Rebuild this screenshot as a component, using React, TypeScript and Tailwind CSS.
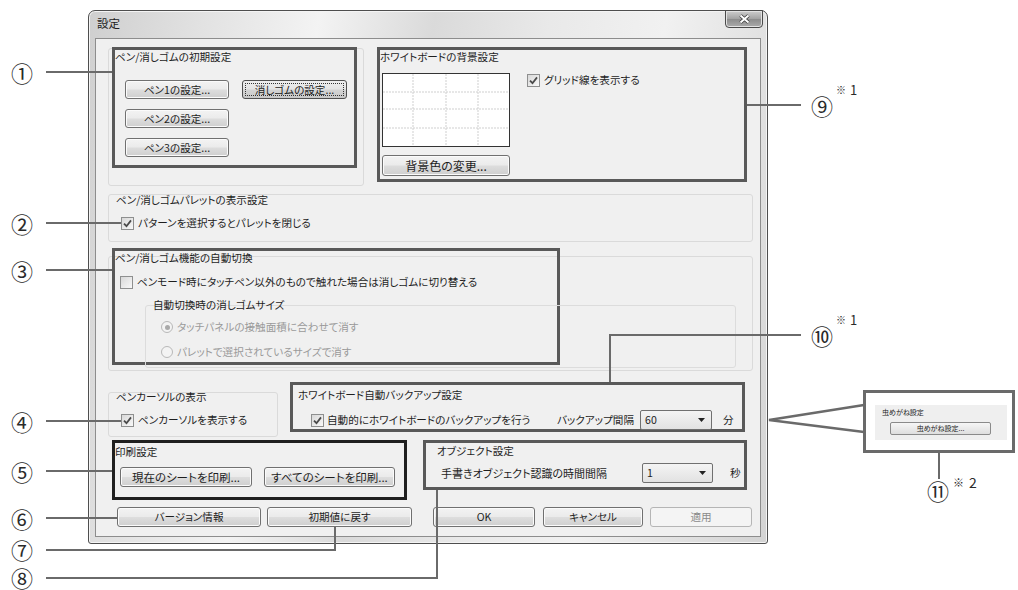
import type { ReactNode } from 'react';

const btnBase =
  'flex items-center justify-center whitespace-nowrap rounded-[3px] border border-[#707070] bg-[linear-gradient(#f3f3f3_0%,#ebebeb_48%,#dddddd_52%,#cfcfcf_100%)] shadow-[inset_0_0_0_1px_#fbfbfb] text-[#1e1e1e]';

function Btn({ className = '', children }: { className?: string; children: ReactNode }) {
  return <div className={`${btnBase} ${className}`}>{children}</div>;
}

function Check({ checked }: { checked?: boolean }) {
  return (
    <span className="flex h-[13px] w-[13px] shrink-0 items-center justify-center border border-[#8e8f8f] bg-[linear-gradient(135deg,#d8d8d8,#f8f8f8)]">
      {checked && (
        <svg width="9" height="9" viewBox="0 0 9 9">
          <path d="M1 4.6 L3.5 7.2 L8 1.4" fill="none" stroke="#4a4a4a" strokeWidth="1.8" />
        </svg>
      )}
    </span>
  );
}

function Radio({ on }: { on?: boolean }) {
  return (
    <span className="flex h-[12px] w-[12px] shrink-0 items-center justify-center rounded-full border border-[#b8b8b8] bg-[#f3f3f3]">
      {on && <span className="h-[5px] w-[5px] rounded-full bg-[#a9a9a9]" />}
    </span>
  );
}

function Select({ className = '', value }: { className?: string; value: string }) {
  return (
    <div
      className={`flex h-[20px] items-center rounded-[2px] border border-[#707070] bg-[linear-gradient(#f4f4f4,#e2e2e2)] pl-[4px] pr-[6px] ${className}`}
    >
      <span className="flex-1">{value}</span>
      <svg width="7" height="4" viewBox="0 0 7 4">
        <path d="M0 0 H7 L3.5 4 Z" fill="#222" />
      </svg>
    </div>
  );
}

function GridPreview() {
  return (
    <div className="h-[74px] w-[128px] border border-[#333] bg-white">
      <svg width="126" height="72">
        {[30, 63, 95].map((x) => (
          <line key={x} x1={x} y1={0} x2={x} y2={72} stroke="#cfcfcf" strokeDasharray="2 1" />
        ))}
        {[18, 35, 54].map((y) => (
          <line key={y} x1={0} y1={y} x2={126} y2={y} stroke="#cfcfcf" strokeDasharray="2 1" />
        ))}
      </svg>
    </div>
  );
}

function CloseButton() {
  return (
    <div className="-mr-[2px] -mt-[1px] ml-auto flex h-[18px] w-[38px] items-center justify-center rounded-b-[4px] border border-[#4a4a4a] bg-[linear-gradient(#cdcdcd,#a2a2a2_50%,#8c8c8c_51%,#ababab)] shadow-[inset_0_0_0_1px_#e2e2e2]">
      <svg width="13" height="10" viewBox="0 0 13 10">
        <path d="M2.5 1.5 L10.5 8.5 M10.5 1.5 L2.5 8.5" stroke="#3a3a3a" strokeWidth="3.6" />
        <path d="M2.5 1.5 L10.5 8.5 M10.5 1.5 L2.5 8.5" stroke="#ffffff" strokeWidth="2" />
      </svg>
    </div>
  );
}

function Dialog() {
  return (
    <div className="flex h-[534px] w-[680px] flex-col rounded-b-[3px] rounded-t-[7px] border border-[#4e4e4e] bg-[linear-gradient(100deg,#cfcfcf_0%,#e2e2e2_15%,#f3f3f3_30%,#dadada_45%,#e9e9e9_60%,#f1f1f1_75%,#d3d3d3_100%)] px-[6px] pb-[6px] shadow-[inset_0_0_0_1px_#f4f4f4]">
      <div className="flex h-[27px] shrink-0 items-start">
        <span className="pl-[2px] pt-[5px] text-[11.5px]">設定</span>
        <CloseButton />
      </div>
      <div className="h-[499px] w-[666px] border border-[#8d8d8d] bg-[#f0f0f0]">
        <div className="flex flex-col pl-[12px] pt-[8px]">
          {/* top row */}
          <div className="flex h-[147px] items-start">
            <div className="mt-[1px] h-[138px] w-[256px] rounded-[3px] border border-[#dadada]">
              <div className="-mt-[2px] ml-[3px] h-[121px] w-[245px] border-[3px] border-[#595959]">
                <div>ペン/消しゴムの初期設定</div>
                <div className="ml-[10px] mt-[16px] grid grid-cols-[104px_105px] gap-x-[13px] gap-y-[10px]">
                  <Btn className="h-[19px]">ペン1の設定...</Btn>
                  <div className="flex h-[19px] items-center justify-center rounded-[3px] border border-[#4f4f4f] bg-[linear-gradient(#eeeeee_0%,#e4e4e4_48%,#d4d4d4_52%,#c8c8c8_100%)] p-[2px]">
                    <span className="flex h-full w-full items-center justify-center border border-dotted border-[#333]">
                      消しゴムの設定...
                    </span>
                  </div>
                  <Btn className="h-[19px]">ペン2の設定...</Btn>
                  <div />
                  <Btn className="h-[19px]">ペン3の設定...</Btn>
                </div>
              </div>
            </div>
            <div className="ml-[13px] h-[135px] w-[370px] border-[3px] border-[#595959]">
              <div>ホワイトボードの背景設定</div>
              <div className="mt-[9px] flex items-start">
                <div className="ml-[2px] flex flex-col">
                  <GridPreview />
                  <Btn className="mt-[8px] h-[21px] w-[128px] text-[12px]">背景色の変更...</Btn>
                </div>
                <div className="ml-[17px] flex items-center gap-[4px]">
                  <Check checked />
                  グリッド線を表示する
                </div>
              </div>
            </div>
          </div>

          {/* palette */}
          <div className="h-[48px] w-[645px] rounded-[3px] border border-[#dadada] px-[7px]">
            <div className="-mt-[2px]">ペン/消しゴムパレットの表示設定</div>
            <div className="ml-[5px] mt-[9px] flex items-center gap-[4px]">
              <Check checked />
              パターンを選択するとパレットを閉じる
            </div>
          </div>

          {/* auto switch */}
          <div className="mt-[14px] h-[115px] w-[645px] rounded-[3px] border border-[#dadada]">
            <div className="-mt-[9px] ml-[3px] h-[117px] w-[448px] border-[3px] border-[#595959]">
              <div>ペン/消しゴム機能の自動切換</div>
              <div className="ml-[5px] mt-[10px] flex items-center gap-[4px]">
                <Check />
                ペンモード時にタッチペン以外のもので触れた場合は消しゴムに切り替える
              </div>
              <div className="ml-[30px] mt-[16px] h-[63px] w-[591px] rounded-[3px] border border-[#dcdcdc]">
                <div className="-mt-[8px] ml-[6px] w-fit px-[1px]">自動切換時の消しゴムサイズ</div>
                <div className="ml-[15px] mt-[8px] flex items-center gap-[4px] text-[#9a9a9a]">
                  <Radio on />
                  タッチパネルの接触面積に合わせて消す
                </div>
                <div className="ml-[15px] mt-[11px] flex items-center gap-[4px] text-[#9a9a9a]">
                  <Radio />
                  パレットで選択されているサイズで消す
                </div>
              </div>
            </div>
          </div>

          {/* row A */}
          <div className="mt-[11px] flex items-start">
            <div className="mt-[10px] h-[45px] w-[170px] rounded-[3px] border border-[#dadada] px-[7px]">
              <div className="-mt-[3px]">ペンカーソルの表示</div>
              <div className="ml-[5px] mt-[9px] flex items-center gap-[4px]">
                <Check checked />
                ペンカーソルを表示する
              </div>
            </div>
            <div className="ml-[12px] h-[50px] w-[455px] border-[3px] border-[#595959]">
              <div className="pl-[5px] pt-[3px]">ホワイトボード自動バックアップ設定</div>
              <div className="mt-[8px] flex h-[20px] items-center whitespace-nowrap">
                <div className="ml-[18px] flex w-[246px] items-center gap-[3px]">
                  <Check checked />
                  自動的にホワイトボードのバックアップを行う
                </div>
                <span className="w-[83px]">バックアップ間隔</span>
                <Select className="w-[72px]" value="60" />
                <span className="ml-[11px]">分</span>
              </div>
            </div>
          </div>

          {/* row B */}
          <div className="mt-[3px] flex items-start">
            <div className="ml-[4px] h-[60px] w-[295px] border-[3px] border-[#1f1f1f]">
              <div className="pt-[2px]">印刷設定</div>
              <div className="mt-[8px] flex gap-[12px] pl-[5px]">
                <Btn className="h-[20px] w-[132px] text-[11.5px]">現在のシートを印刷...</Btn>
                <Btn className="h-[20px] w-[131px] text-[11.5px]">すべてのシートを印刷...</Btn>
              </div>
            </div>
            <div className="ml-[16px] h-[50px] w-[324px] border-[3px] border-[#595959]">
              <div className="pl-[11px] pt-[1px]">オブジェクト設定</div>
              <div className="mt-[5px] flex h-[20px] items-center whitespace-nowrap">
                <span className="ml-[15px] w-[201px] text-[11px]">手書きオブジェクト認識の時間間隔</span>
                <Select className="w-[71px]" value="1" />
                <span className="ml-[17px]">秒</span>
              </div>
            </div>
          </div>

          {/* buttons */}
          <div className="mt-[7px] flex items-center">
            <Btn className="ml-[9px] h-[20px] w-[144px]">バージョン情報</Btn>
            <Btn className="ml-[6px] h-[20px] w-[145px]">初期値に戻す</Btn>
            <Btn className="ml-[21px] h-[20px] w-[102px]">OK</Btn>
            <Btn className="ml-[8px] h-[20px] w-[100px]">キャンセル</Btn>
            <div className="ml-[7px] flex h-[20px] w-[102px] items-center justify-center rounded-[3px] border border-[#b5b5b5] bg-[#f4f4f4] text-[#8a8a8a]">
              適用
            </div>
          </div>
        </div>
      </div>
    </div>
  );
}

function Callouts() {
  return (
    <>
      <svg className="pointer-events-none absolute left-0 top-0" width="1018" height="590">
        <g fill="none" stroke="#6a6a6a" strokeWidth="2">
          <path d="M46 72 H112" />
          <path d="M46 223 H121" />
          <path d="M46 270 H112" />
          <path d="M46 421 H121" />
          <path d="M46 471 H112" />
          <path d="M46 518 H117" />
          <path d="M46 550 H335 V527" />
          <path d="M46 578 H437 V490" />
          <path d="M747 105 H801" />
          <path d="M801 335 H610 V382" />
          <path d="M939 435 V479" />
        </g>
        <g fill="none" stroke="#6a6a6a" strokeWidth="2.5">
          <path d="M864 405 L769 420 L864 432" />
        </g>
      </svg>

      <div className="absolute left-[863px] top-[390px] h-[63px] w-[152px] border-[3px] border-[#6a6a6a] bg-white">
        <div className="ml-[9px] mt-[12px] h-[35px] w-[132px] bg-[#efefef] text-[7px] leading-[9px]">
          <div className="pl-[7px] pt-[3px]">虫めがね設定</div>
          <div className="ml-[15px] mt-[5px] flex h-[13px] w-[101px] items-center justify-center rounded-[2px] border border-[#8a8a8a] bg-[linear-gradient(#f6f6f6,#dedede)]">
            虫めがね設定...
          </div>
        </div>
      </div>

      <span className="absolute left-[11px] top-[61px] text-[22px] leading-[22px] text-[#2a2a2a]">①</span>
      <span className="absolute left-[11px] top-[212px] text-[22px] leading-[22px] text-[#2a2a2a]">②</span>
      <span className="absolute left-[11px] top-[259px] text-[22px] leading-[22px] text-[#2a2a2a]">③</span>
      <span className="absolute left-[11px] top-[410px] text-[22px] leading-[22px] text-[#2a2a2a]">④</span>
      <span className="absolute left-[11px] top-[460px] text-[22px] leading-[22px] text-[#2a2a2a]">⑤</span>
      <span className="absolute left-[11px] top-[507px] text-[22px] leading-[22px] text-[#2a2a2a]">⑥</span>
      <span className="absolute left-[11px] top-[538px] text-[22px] leading-[22px] text-[#2a2a2a]">⑦</span>
      <span className="absolute left-[11px] top-[566px] text-[22px] leading-[22px] text-[#2a2a2a]">⑧</span>
      <span className="absolute left-[811px] top-[94px] text-[22px] leading-[22px] text-[#2a2a2a]">⑨</span>
      <span className="absolute left-[811px] top-[324px] text-[22px] leading-[22px] text-[#2a2a2a]">⑩</span>
      <span className="absolute left-[927px] top-[479px] text-[22px] leading-[22px] text-[#2a2a2a]">⑪</span>

      <span className="absolute left-[836px] top-[83px] flex items-start gap-[4px] leading-[14px] text-[#2a2a2a]">
        <span className="text-[10px]">※</span>
        <span className="text-[13px]">1</span>
      </span>
      <span className="absolute left-[836px] top-[313px] flex items-start gap-[4px] leading-[14px] text-[#2a2a2a]">
        <span className="text-[10px]">※</span>
        <span className="text-[13px]">1</span>
      </span>
      <span className="absolute left-[953px] top-[475px] flex items-start gap-[5px] leading-[15px] text-[#2a2a2a]">
        <span className="text-[11px]">※</span>
        <span className="text-[14px]">2</span>
      </span>
    </>
  );
}

export default function App() {
  return (
    <div className="relative h-[590px] w-[1018px] overflow-hidden bg-white pl-[88px] pt-[10px] font-['Noto_Sans_CJK_JP',sans-serif] text-[10.6px] leading-[14px] text-[#1e1e1e] [font-feature-settings:'palt']">
      <Dialog />
      <Callouts />
    </div>
  );
}
